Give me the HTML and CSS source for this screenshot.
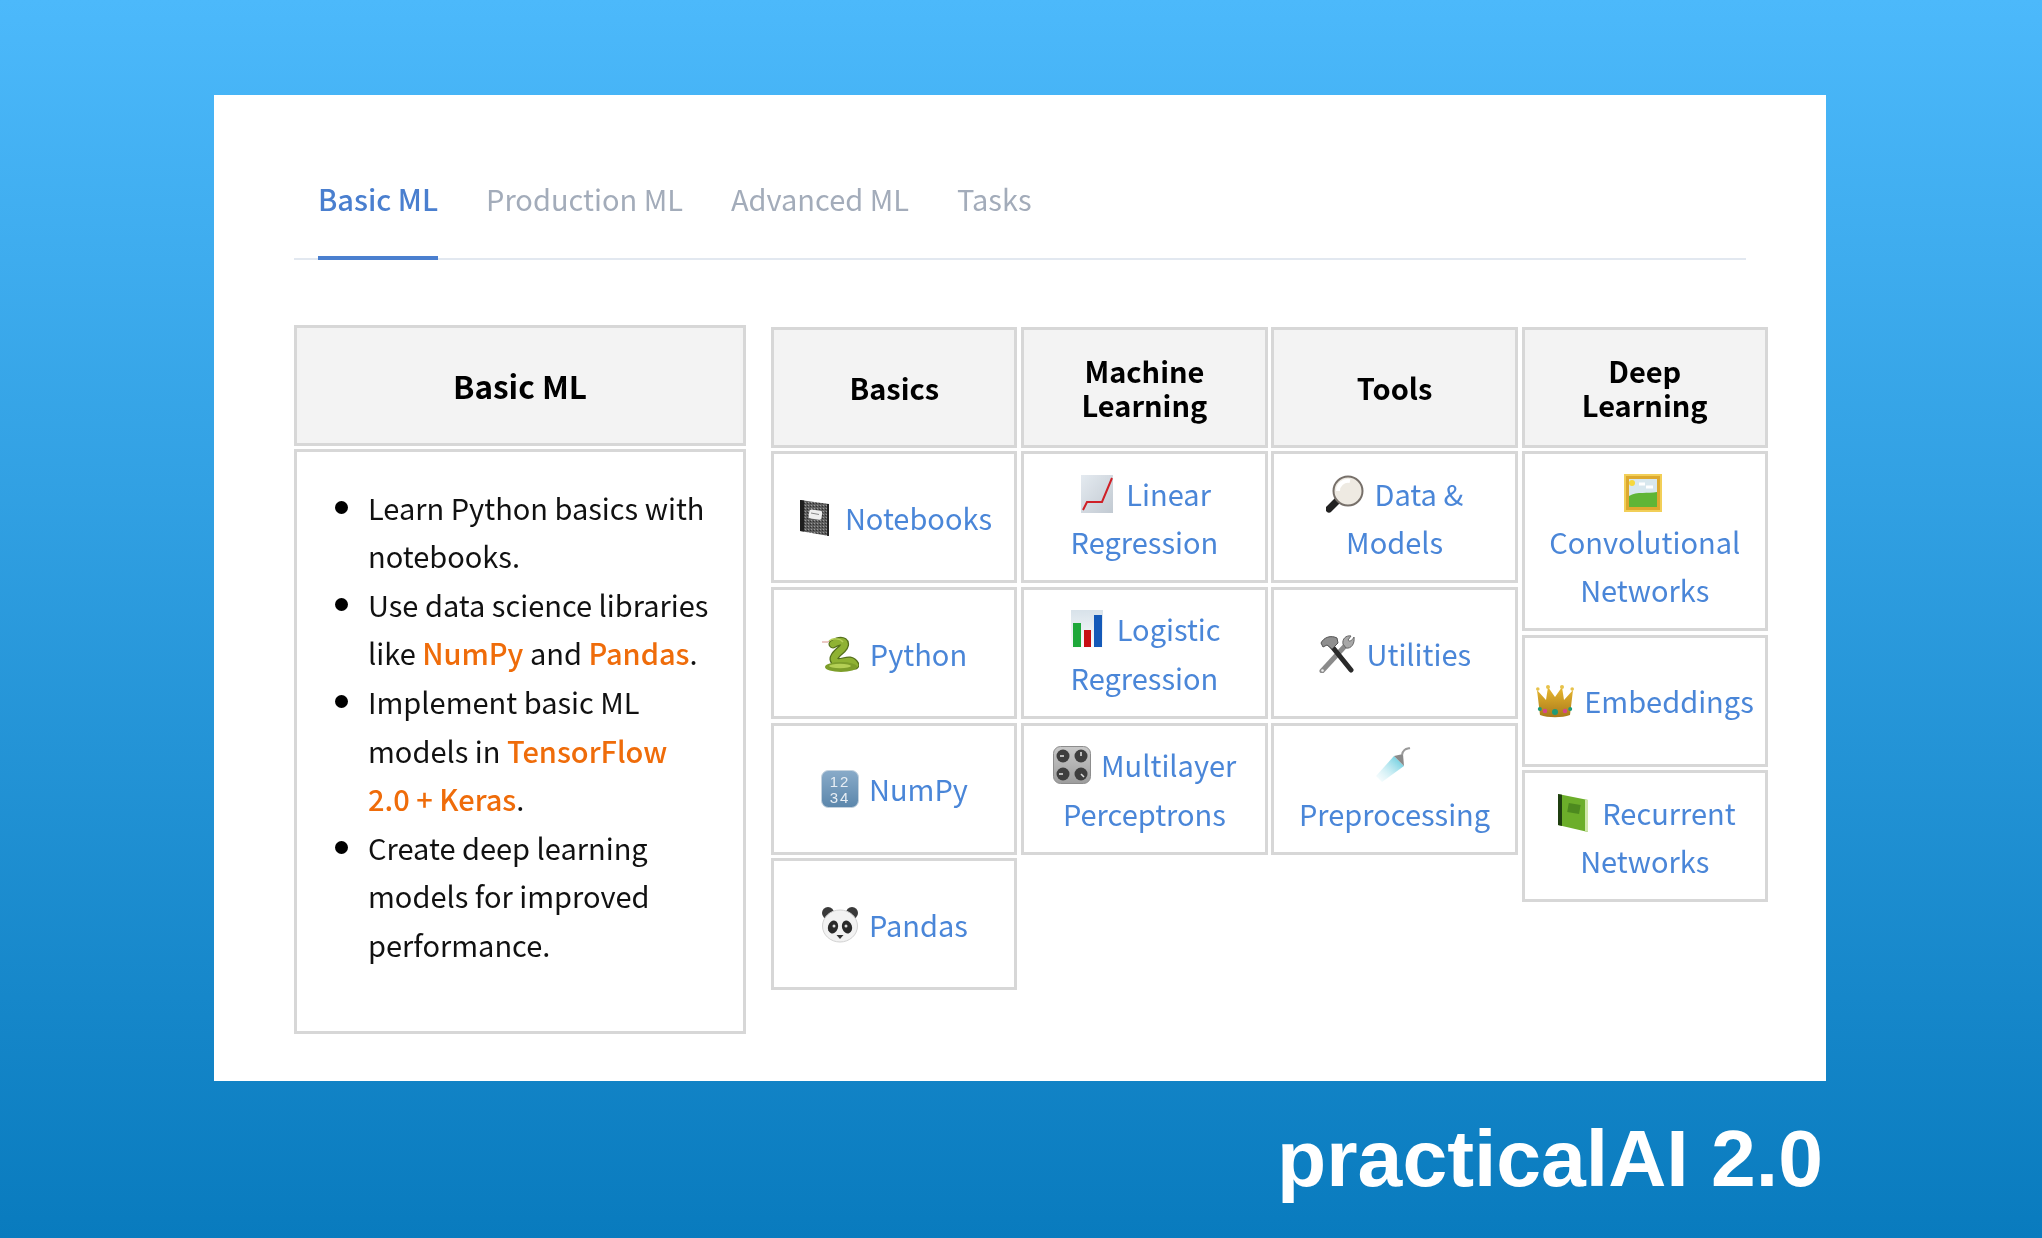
FILE: index.html
```html
<!DOCTYPE html>
<html lang="en">
<head>
<meta charset="utf-8">
<title>practicalAI 2.0</title>
<link rel="stylesheet" href="styles.css">
</head>
<body>
<main class="card">
  <nav class="tabs">
    <a class="tab active">Basic ML</a>
    <a class="tab">Production ML</a>
    <a class="tab">Advanced ML</a>
    <a class="tab">Tasks</a>
  </nav>
  <div class="content">
    <section class="summary">
      <h2 class="head summary-head">Basic ML</h2>
      <div class="summary-body">
        <ul class="points">
          <li>Learn Python basics with notebooks.</li>
          <li>Use data science libraries like <b>NumPy</b> and <b>Pandas</b>.</li>
          <li>Implement basic ML models in <b>TensorFlow 2.0 + Keras</b>.</li>
          <li>Create deep learning models for improved performance.</li>
        </ul>
      </div>
    </section>
    <section class="lessons">
      <div class="col">
        <h3 class="head">Basics</h3>
        <div class="cell"><a>
          <svg class="emoji" viewBox="0 0 38 38"><defs><pattern id="marble" width="3" height="3" patternUnits="userSpaceOnUse"><rect width="3" height="3" fill="#5d5d5d"/><rect width="1" height="1" fill="#9a9a9a"/><rect x="2" y="1" width="1" height="1" fill="#2f2f2f"/></pattern></defs><path d="M4 1 L33 5 V37 L4 32Z" fill="url(#marble)"/><path d="M4 1 L8 1.600 V32.600 L4 32Z" fill="#1e1e1e"/><path d="M33 5 V37 L31 36.700 V5Z" fill="#222"/><rect x="13" y="11" width="13" height="9" rx="2" fill="#eee" transform="rotate(8 19 15)"/><path d="M15 14 L23 15.500" stroke="#888"/></svg>
          Notebooks</a></div>
        <div class="cell"><a>
          <svg class="emoji" viewBox="0 0 38 38"><path d="M16 7 C12 5 8 6 7 7 L1 7" fill="none" stroke="#d8938c" stroke-width="1"/><path d="M12 9 C22 3 27 8 21 14 C15 19 10 24 15 27 C21 30 29 21 34 30" fill="none" stroke="#55701c" stroke-width="9" stroke-linecap="round"/><path d="M12 9 C22 3 27 8 21 14 C15 19 10 24 15 27 C21 30 29 21 34 30" fill="none" stroke="#8fb233" stroke-width="6.500" stroke-linecap="round"/><ellipse cx="20" cy="32" rx="16" ry="5" fill="#7d9e2a"/><ellipse cx="19" cy="31" rx="11" ry="2.200" fill="#b4cf55"/><path d="M8 6 C12 3 19 3 22 7" fill="none" stroke="#b7d05a" stroke-width="1.500"/></svg>
          Python</a></div>
        <div class="cell"><a>
          <svg class="emoji" viewBox="0 0 38 38"><defs><linearGradient id="tile" x1="0" y1="0" x2="0" y2="1"><stop offset="0" stop-color="#89abc9"/><stop offset="1" stop-color="#5b86ab"/></linearGradient></defs><rect x=".5" y=".5" width="37" height="37" rx="7" fill="url(#tile)" stroke="#c4d2de"/><text class="tile-num" x="19" y="17">12</text><text class="tile-num" x="19" y="33">34</text></svg>
          NumPy</a></div>
        <div class="cell"><a>
          <svg class="emoji" viewBox="0 0 38 38"><circle cx="7" cy="7" r="6" fill="#3a3a3a"/><circle cx="31" cy="7" r="6" fill="#3a3a3a"/><ellipse cx="19" cy="20" rx="17.500" ry="16" fill="#f2f2f2" stroke="#d2d2d2"/><ellipse cx="12" cy="21" rx="5" ry="6.500" fill="#2a2a2a" transform="rotate(18 12 21)"/><ellipse cx="26" cy="21" rx="5" ry="6.500" fill="#2a2a2a" transform="rotate(-18 26 21)"/><circle cx="13" cy="20" r="1.500" fill="#ddd"/><circle cx="25" cy="20" r="1.500" fill="#ddd"/><path d="M15.500 29 h7 l-3.500 4z" fill="#333"/></svg>
          Pandas</a></div>
      </div>
      <div class="col">
        <h3 class="head">Machine Learning</h3>
        <div class="cell"><a>
          <svg class="emoji" viewBox="0 0 38 38"><defs><linearGradient id="paper" x1="0" y1="0" x2="1" y2="1"><stop offset="0" stop-color="#e4eaf0"/><stop offset="1" stop-color="#c2cad2"/></linearGradient></defs><rect x="3" width="32" height="38" fill="url(#paper)"/><path d="M5 35 L9 27 L24 27 L34 3" fill="none" stroke="#cf2027" stroke-width="2"/></svg>
          Linear Regression</a></div>
        <div class="cell"><a>
          <svg class="emoji" viewBox="0 0 38 38"><defs><linearGradient id="sheet" x1="0" y1="0" x2="0" y2="1"><stop offset="0" stop-color="#d8e2ea"/><stop offset="1" stop-color="#fbfcfd"/></linearGradient></defs><rect x="3" width="32" height="38" fill="url(#sheet)"/><rect x="5" y="13" width="8" height="24" fill="#1ea83a"/><rect x="16" y="20" width="7" height="17" fill="#c80f14"/><rect x="26" y="5" width="8" height="32" fill="#1459b8"/></svg>
          Logistic Regression</a></div>
        <div class="cell"><a>
          <svg class="emoji" viewBox="0 0 38 38"><defs><linearGradient id="metal" x1="0" y1="0" x2="0" y2="1"><stop offset="0" stop-color="#c9c9c9"/><stop offset="1" stop-color="#9d9d9d"/></linearGradient></defs><rect x=".5" y=".5" width="37" height="37" rx="7" fill="url(#metal)" stroke="#8d8d8d"/><g fill="#3e3e3e"><circle cx="10" cy="10" r="6.500"/><circle cx="28" cy="10" r="6.500"/><circle cx="10" cy="28" r="6.500"/><circle cx="28" cy="28" r="6.500"/></g><g stroke="#ddd" stroke-width="1.600"><path d="M7 10h4"/><path d="M28 6v4"/><path d="M6 28h4"/><path d="M31 31l-3-3"/></g></svg>
          Multilayer Perceptrons</a></div>
      </div>
      <div class="col">
        <h3 class="head">Tools</h3>
        <div class="cell"><a>
          <svg class="emoji" viewBox="0 0 38 38"><path d="M13 24 L3 34" stroke="#222" stroke-width="7" stroke-linecap="round"/><path d="M15 22 L12 25" stroke="#8a8a8a" stroke-width="4"/><circle cx="22" cy="16" r="14.500" fill="#eeeae2" stroke="#77706a" stroke-width="2"/><path d="M12 16 A10 10 0 0 1 24 6" fill="none" stroke="#fff" stroke-width="4"/></svg>
          Data &amp; Models</a></div>
        <div class="cell"><a>
          <svg class="emoji" viewBox="0 0 38 38"><path d="M4 36 L27 11" stroke="#8b8b8b" stroke-width="5" stroke-linecap="round"/><path d="M36 2 C34 6 31 7 30 5 L33 1 C28 0 24 4 25 9 L28 13 C33 14 37 9 36 2Z" fill="#a8a8a8" stroke="#666"/><circle cx="4.500" cy="35.500" r="1.300" fill="#eee"/><path d="M12 9 L33 35" stroke="#2a2a2a" stroke-width="5" stroke-linecap="round"/><path d="M3 8 C6 2 13 0 19 3 L20 8 L14 14 L9 10 L5 12Z" fill="#8f8f8f" stroke="#555"/></svg>
          Utilities</a></div>
        <div class="cell"><a>
          <svg class="emoji" viewBox="0 0 38 38"><defs><linearGradient id="spray" x1="1" y1="0" x2="0" y2="1"><stop offset="0" stop-color="#4cc3d8"/><stop offset="1" stop-color="#e4f6fa" stop-opacity=".2"/></linearGradient></defs><path d="M20 10 L30 20 L8 36 L2 30Z" fill="url(#spray)"/><path d="M20 10 L30 20 L29 8Z" fill="#8a8a8a"/><path d="M28 9 C29 3 32 3 36 2" fill="none" stroke="#9a9a9a" stroke-width="2"/></svg>
          Preprocessing</a></div>
      </div>
      <div class="col">
        <h3 class="head">Deep Learning</h3>
        <div class="cell"><a>
          <svg class="emoji" viewBox="0 0 38 38"><rect width="38" height="38" fill="#dda92e"/><rect x="1" y="1" width="36" height="36" fill="none" stroke="#f2cf58" stroke-width="2"/><rect x="5" y="5" width="28" height="28" fill="#d8e7ee"/><path d="M5 22 C13 17 24 20 33 18 V33 H5Z" fill="#5fb536"/><circle cx="8" cy="9" r="3" fill="#f6d83d"/><path d="M15 10h6M22 13h7" stroke="#fff" stroke-width="3"/></svg>
          Convolutional Networks</a></div>
        <div class="cell"><a>
          <svg class="emoji" viewBox="0 0 38 38"><defs><linearGradient id="gold" x1="0" y1="0" x2="0" y2="1"><stop offset="0" stop-color="#e9b92f"/><stop offset="1" stop-color="#a9791b"/></linearGradient></defs><path d="M4 33 L1 8 L10 18 L12 5 L19 15 L26 5 L28 18 L37 8 L34 33 C26 36 12 36 4 33Z" fill="url(#gold)"/><circle cx="1.800" cy="7" r="1.800" fill="#e7c24a"/><circle cx="36.200" cy="7" r="1.800" fill="#e7c24a"/><circle cx="12" cy="5" r="2" fill="#e7c24a"/><circle cx="26" cy="5" r="2" fill="#e7c24a"/><circle cx="19" cy="30" r="3" fill="#1f9a77"/><circle cx="9" cy="29" r="2.200" fill="#d6478c"/><circle cx="29" cy="29" r="2.200" fill="#d6478c"/><circle cx="3.800" cy="27" r="2" fill="#1f9a77"/><circle cx="34.200" cy="27" r="2" fill="#1f9a77"/></svg>
          Embeddings</a></div>
        <div class="cell"><a>
          <svg class="emoji" viewBox="0 0 38 38"><path d="M4 0 L34 6 V38 L4 31Z" fill="#6cae2a"/><path d="M4 0 L8 0.800 V32 L4 31Z" fill="#1f3f10"/><path d="M34 6 V38 L31 37.300 V5.400Z" fill="#cfe6a9"/><rect x="14" y="10" width="12" height="9" fill="#4d8a1f" transform="rotate(10 20 14)"/></svg>
          Recurrent Networks</a></div>
      </div>
    </section>
  </div>
</main>
<footer class="brand">practicalAI 2.0</footer>
</body>
</html>
```

FILE: styles.css
```css
* { box-sizing: border-box; }
html, body { margin: 0; height: 100%; }
body {
  padding: 95px 216px 0 214px;
  background: linear-gradient(180deg, #4cb9fb 0%, #097bbe 100%);
  font-family: "Noto Sans CJK JP", "Noto Sans", sans-serif;
  overflow: hidden;
}
.card {
  height: 986px;
  padding: 79px 80px 0;
  background: #fff;
  color: #111;
  font-size: 29px;
  line-height: 48.6px;
  filter: blur(.45px);
}
.tabs {
  display: flex;
  border-bottom: 2px solid #e2e8f0;
}
.tab {
  margin: 0 24px -2px;
  padding-bottom: 33px;
  border-bottom: 4px solid transparent;
  color: #a3acba;
}
.tab.active {
  border-bottom-color: #4a7fcf;
  color: #4a7fcf;
  font-weight: 500;
}
.content {
  display: flex;
  align-items: flex-start;
  gap: 25px;
  width: 1474px;
  margin-top: 65px;
}
.head {
  display: flex;
  align-items: center;
  justify-content: center;
  margin: 0;
  height: 121px;
  padding: 0 30px;
  border: 3px solid #d7d7d7;
  background: #f3f3f3;
  color: #000;
  font-size: 29px;
  font-weight: 700;
  line-height: 34px;
  text-align: center;
}
.summary {
  flex: 0 0 452px;
  display: flex;
  flex-direction: column;
  gap: 3px;
}
.summary-head { font-size: 31.500px; }
.summary-body {
  height: 585px;
  border: 3px solid #d7d7d7;
  padding: 31px 30px 0 0;
}
.points {
  margin: 0;
  padding: 0 0 0 71px;
  list-style: none;
}
.points li { position: relative; }
.points li::before {
  content: "";
  position: absolute;
  left: -33px;
  top: 18px;
  width: 13px;
  height: 13px;
  border-radius: 50%;
  background: #000;
}
.points b {
  color: #ef6c0a;
  font-weight: 500;
}
.lessons {
  flex: 1;
  display: grid;
  grid-template-columns: repeat(4, 1fr);
  gap: 3.7px;
  margin-top: 2px;
}
.col {
  display: flex;
  flex-direction: column;
  gap: 3.7px;
}
.cell {
  display: flex;
  align-items: center;
  justify-content: center;
  min-height: 132px;
  padding: 14px 10px;
  border: 3px solid #d7d7d7;
  text-align: center;
}
.cell a { color: #4a86d8; }
.emoji {
  width: 38px;
  height: 38px;
  margin-right: 4px;
  vertical-align: -7px;
}
.tile-num {
  fill: #e8eef4;
  font-family: "Liberation Sans", sans-serif;
  font-size: 15px;
  letter-spacing: 2px;
  text-anchor: middle;
}
.brand {
  padding: 31px 3px 0 0;
  color: #fff;
  font-family: "Liberation Sans", sans-serif;
  font-size: 80.500px;
  font-weight: 700;
  line-height: 92px;
  text-align: right;
}
```
